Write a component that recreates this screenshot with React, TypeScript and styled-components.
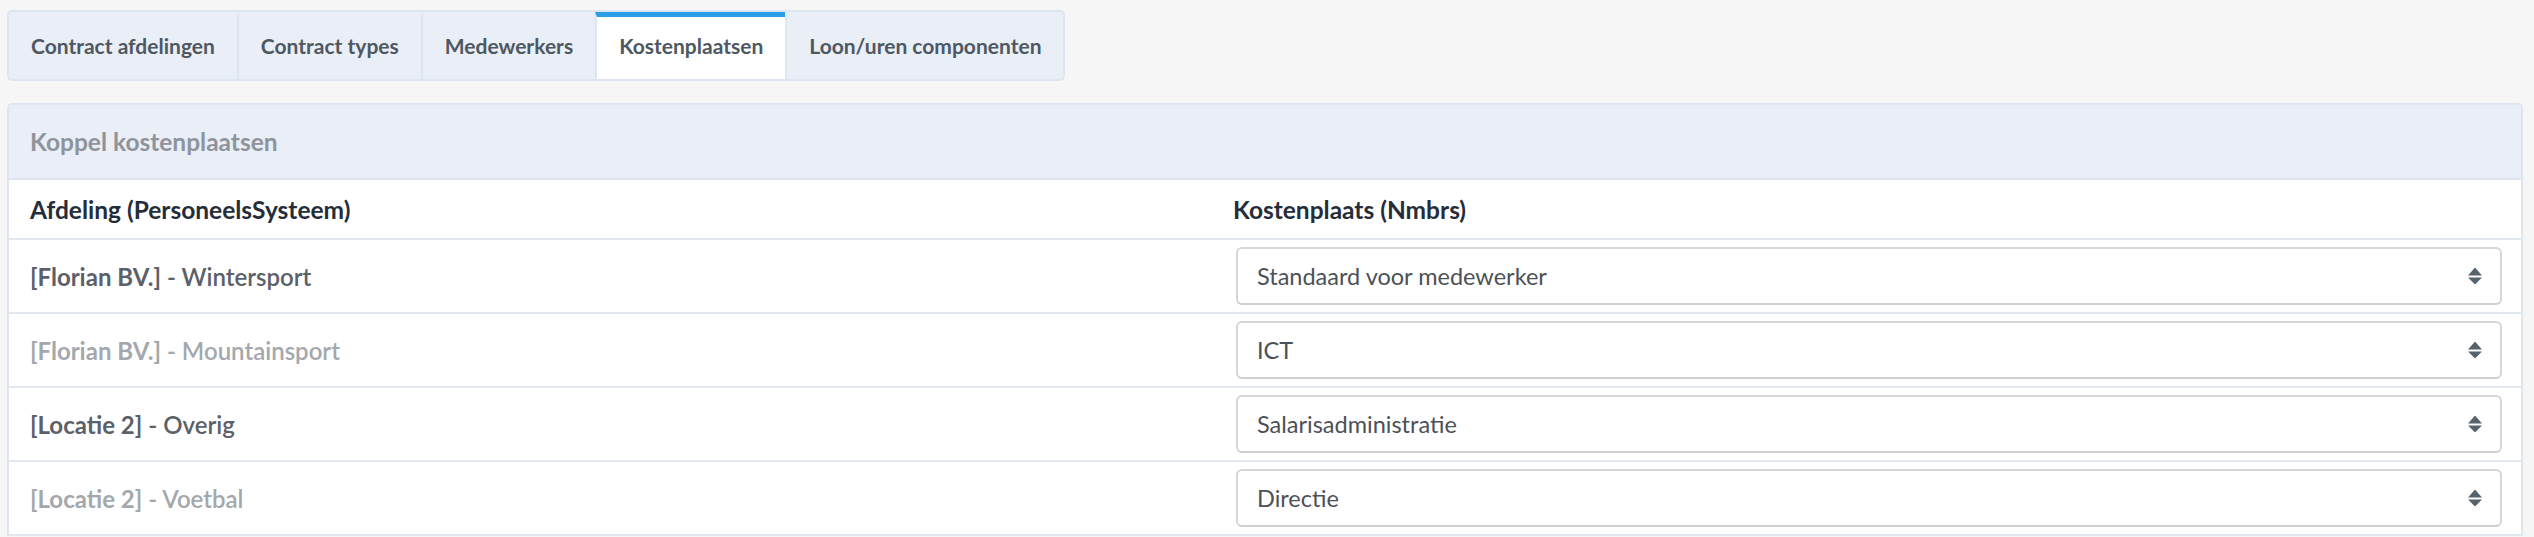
import React from "react";
import styled, { createGlobalStyle } from "styled-components";

const GlobalStyle = createGlobalStyle`
  html, body {
    margin: 0;
    padding: 0;
    background: #f6f6f6;
    font-family: Lato, "Open Sans", Arial, sans-serif;
  }
  * { box-sizing: border-box; }
`;

const Page = styled.div`
  padding: 10px 11px 0 7px;
  display: flex;
  flex-direction: column;
  align-items: flex-start;
  gap: 22px;
`;

const TabBar = styled.div`
  display: inline-flex;
  height: 71px;
  background: #e9eef7;
  border: 2px solid #dde5f0;
  border-radius: 5px;
  overflow: hidden;
`;

const Tab = styled.div<{ $active?: boolean }>`
  display: flex;
  align-items: center;
  padding: 0 22px;
  font-size: 21px;
  font-weight: 700;
  color: #4e5862;
  background: ${(p) => (p.$active ? "#ffffff" : "transparent")};
  border-top: 5px solid ${(p) => (p.$active ? "#2b9de6" : "transparent")};
  padding-bottom: 5px;
  & + & {
    border-left: 2px solid #dde5f0;
  }
`;

const Panel = styled.div`
  width: 100%;
  border: 2px solid #dde5f0;
  border-bottom: none;
  border-radius: 5px 5px 0 0;
  background: #ffffff;
`;

const PanelHeader = styled.div`
  height: 75px;
  display: flex;
  align-items: center;
  padding: 0 21px;
  background: #e9eef7;
  border-bottom: 2px solid #dde5f0;
  font-size: 24.5px;
  font-weight: 700;
  color: #8f949b;
`;

const Row = styled.div<{ $head?: boolean }>`
  display: grid;
  grid-template-columns: 1203px 1fr;
  height: ${(p) => (p.$head ? 60 : 74)}px;
  border-bottom: 2px solid #e1e7f1;
`;

const Cell = styled.div`
  display: flex;
  align-items: center;
  padding: 0 21px;
`;

const HeadText = styled.span`
  font-size: 24.5px;
  font-weight: 700;
  color: #262d3a;
`;

const DeptText = styled.span<{ $muted?: boolean }>`
  font-size: 24px;
  font-weight: 600;
  color: ${(p) => (p.$muted ? "#a4a8ad" : "#5b6069")};
  b {
    font-weight: 700;
  }
`;

const SelectCell = styled.div`
  display: flex;
  align-items: center;
  padding: 0 19px 0 24px;
`;

const SelectWrap = styled.div`
  position: relative;
  width: 100%;
`;

const Select = styled.select`
  appearance: none;
  -webkit-appearance: none;
  width: 100%;
  height: 58px;
  padding: 0 50px 0 19px;
  border: 2px solid #d6d6d6;
  border-bottom-color: #cfcfcf;
  border-radius: 6px;
  background: #ffffff;
  font-family: Lato, "Open Sans", Arial, sans-serif;
  font-size: 23.5px;
  color: #4c5157;
  outline: none;
`;

const Arrows = styled.svg`
  position: absolute;
  right: 20px;
  top: 50%;
  transform: translateY(-50%);
  pointer-events: none;
`;

const SortArrows = () => (
  <Arrows width="14" height="17" viewBox="0 0 14 17">
    <path d="M7 0 L14 8 L0 8 Z" fill="#56636d" />
    <path d="M0 10 L14 10 L7 17 Z" fill="#56636d" />
  </Arrows>
);

const tabs = [
  "Contract afdelingen",
  "Contract types",
  "Medewerkers",
  "Kostenplaatsen",
  "Loon/uren componenten",
];

const rows = [
  { org: "[Florian BV.]", name: "Wintersport", muted: false, value: "Standaard voor medewerker" },
  { org: "[Florian BV.]", name: "Mountainsport", muted: true, value: "ICT" },
  { org: "[Locatie 2]", name: "Overig", muted: false, value: "Salarisadministratie" },
  { org: "[Locatie 2]", name: "Voetbal", muted: true, value: "Directie" },
];

const options = ["Standaard voor medewerker", "ICT", "Salarisadministratie", "Directie"];

export default function App() {
  return (
    <>
      <GlobalStyle />
      <Page>
        <TabBar>
          {tabs.map((t) => (
            <Tab key={t} $active={t === "Kostenplaatsen"}>
              {t}
            </Tab>
          ))}
        </TabBar>
        <Panel>
          <PanelHeader>Koppel kostenplaatsen</PanelHeader>
          <Row $head>
            <Cell>
              <HeadText>Afdeling (PersoneelsSysteem)</HeadText>
            </Cell>
            <Cell>
              <HeadText>Kostenplaats (Nmbrs)</HeadText>
            </Cell>
          </Row>
          {rows.map((r) => (
            <Row key={r.name}>
              <Cell>
                <DeptText $muted={r.muted}>
                  <b>{r.org}</b> - {r.name}
                </DeptText>
              </Cell>
              <SelectCell>
                <SelectWrap>
                  <Select defaultValue={r.value}>
                    {options.map((o) => (
                      <option key={o}>{o}</option>
                    ))}
                  </Select>
                  <SortArrows />
                </SelectWrap>
              </SelectCell>
            </Row>
          ))}
        </Panel>
      </Page>
    </>
  );
}
